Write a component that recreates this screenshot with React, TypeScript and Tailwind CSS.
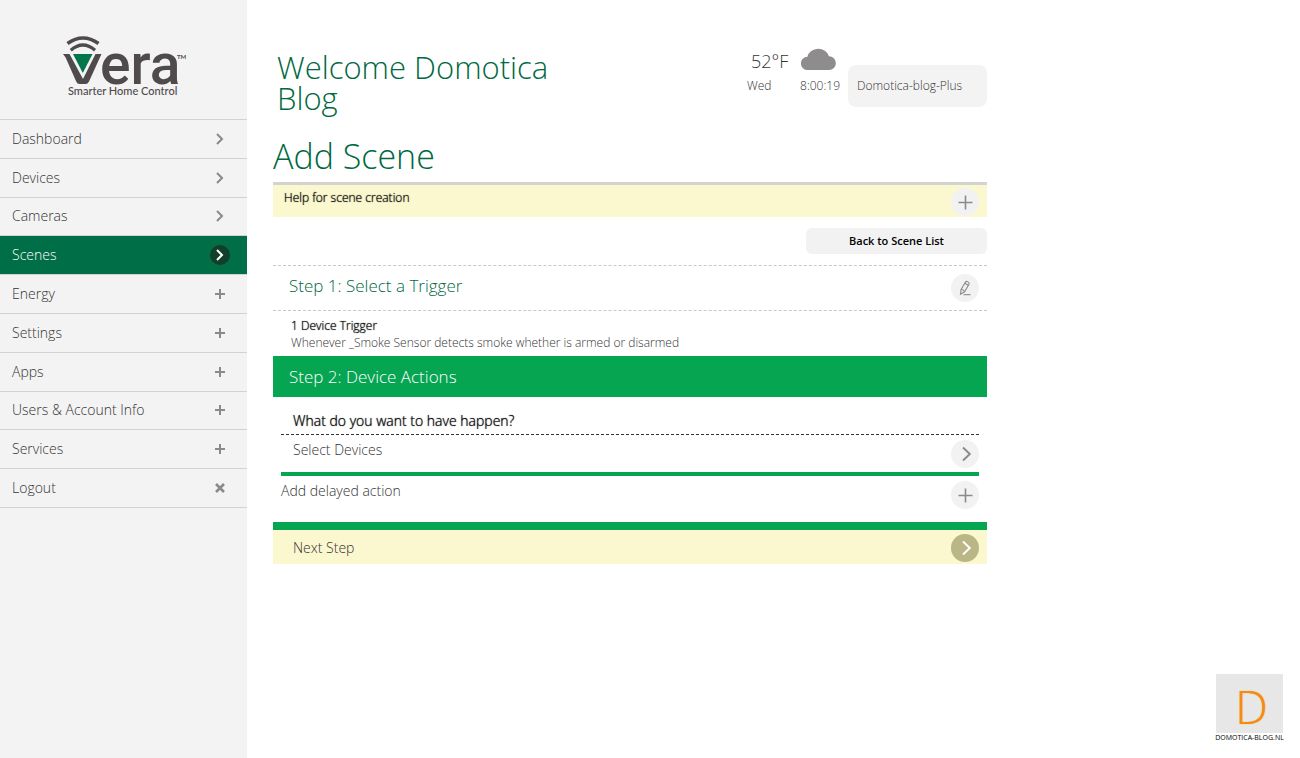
import React from "react";

type Glyph = "chevron" | "plus" | "close";

const NAV: { label: string; glyph: Glyph; active?: boolean }[] = [
  { label: "Dashboard", glyph: "chevron" },
  { label: "Devices", glyph: "chevron" },
  { label: "Cameras", glyph: "chevron" },
  { label: "Scenes", glyph: "chevron", active: true },
  { label: "Energy", glyph: "plus" },
  { label: "Settings", glyph: "plus" },
  { label: "Apps", glyph: "plus" },
  { label: "Users & Account Info", glyph: "plus" },
  { label: "Services", glyph: "plus" },
  { label: "Logout", glyph: "close" },
];

function NavGlyph({ glyph }: { glyph: Glyph }) {
  const paths: Record<Glyph, string> = {
    chevron: "M7 5 L12 10 L7 15",
    plus: "M10 5 V15 M5 10 H15",
    close: "M6 6 L14 14 M14 6 L6 14",
  };
  return (
    <svg viewBox="0 0 20 20" className="size-5" fill="none" stroke="currentColor" strokeWidth={glyph === "close" ? 2.6 : 2} aria-hidden="true">
      <path d={paths[glyph]} />
    </svg>
  );
}

function RoundButton({ label, glyph, strong }: { label: string; glyph: "plus" | "chevron" | "edit"; strong?: boolean }) {
  return (
    <button
      type="button"
      aria-label={label}
      className={
        strong
          ? "flex size-7 shrink-0 items-center justify-center rounded-full bg-[#bbb686] text-white"
          : "flex size-7 shrink-0 items-center justify-center rounded-full bg-[#f2f2f2] text-[#8a8a8a]"
      }
    >
      <svg viewBox="0 0 28 28" className="size-7" fill="none" stroke="currentColor" aria-hidden="true">
        {glyph === "plus" && <path d="M14.500 7.500 V21.500 M7.500 14.500 H21.500" strokeWidth="1.600" />}
        {glyph === "chevron" && <path d="M12 7.500 L18.800 14 L12 20.500" strokeWidth="1.900" />}
        {glyph === "edit" && (
          <g strokeWidth="1.100">
            <path d="M9.500 20.200 L10 15.600 L14.600 7.800 C15.400 6.600 18.900 8.500 18.100 10 L13.600 17.800 Z" />
            <path d="M10 15.600 C11.500 15.400 13.200 16.400 13.600 17.800 M13.800 9.300 L17.300 11.300" />
            <path d="M12.500 20.700 H19.500" />
          </g>
        )}
      </svg>
    </button>
  );
}

function VeraLogo() {
  return (
    <svg viewBox="0 0 126 64" className="h-16 w-[126px] overflow-visible" role="img" aria-label="Vera Smarter Home Control">
      <g fill="none" stroke="#4f4a4b">
        <path d="M5.500 8.500 Q21 -2.500 36.500 8.500" strokeWidth="3.600" />
        <path d="M8.800 15.200 Q21 5 33 15.200" strokeWidth="3.400" />
      </g>
      <path d="M1 19 H7.500 L21 44 L33.500 19 H39.500 L27 46.500 Q25.800 49 23.500 49 H17.500 Q15.400 49 14.200 46.500 L3.600 22.500 Z" fill="#4f4a4b" />
      <path d="M11 19 H30.500 L20.800 38 Z" fill="#00764a" />
      <text x="38" y="49" fontFamily="Roboto, sans-serif" fontSize="57" fontWeight="500" fill="#4f4a4b">era</text>
      <text x="115" y="24" fontFamily="Lato, sans-serif" fontSize="6" fontWeight="700" fill="#4f4a4b">TM</text>
      <text x="6" y="60" fontFamily="Lato, sans-serif" fontSize="11" fontWeight="500" fill="#4f4a4b">Smarter Home Control</text>
    </svg>
  );
}

export default function App() {
  return (
    <div className="relative flex min-h-screen bg-white font-['Open_Sans',sans-serif] font-light text-[#333]">
      <aside className="w-[247px] shrink-0 bg-[#f3f3f3]">
        <div className="flex h-[119px] items-end pb-5 pl-[62px]">
          <VeraLogo />
        </div>
        <nav aria-label="Main" className="grid h-[389px] auto-rows-fr border-t border-[#d2d2d2]">
          {NAV.map((item) => (
            <a
              key={item.label}
              href="#"
              aria-current={item.active ? "page" : undefined}
              className={
                item.active
                  ? "flex items-center justify-between border-b border-[#d2d2d2] bg-[#006e46] pr-[17px] pl-3 text-sm text-white"
                  : "flex items-center justify-between border-b border-[#d2d2d2] pr-[17px] pl-3 text-sm"
              }
            >
              <span>{item.label}</span>
              <span className={item.active ? "rounded-full bg-[#123f2c] text-white" : "text-[#8a8a8a]"}>
                <NavGlyph glyph={item.glyph} />
              </span>
            </a>
          ))}
        </nav>
      </aside>

      <main className="min-w-0 flex-1 pr-6 pl-[26px]">
        <div className="max-w-[714px]">
          <header className="flex items-start pt-[47px] pl-1">
            <h1 className="mt-[5px] w-[300px] text-[31px] leading-[31px] text-[#00693f]">Welcome Domotica Blog</h1>
            <div className="ml-auto w-[93px]">
              <div className="flex items-start justify-between pr-1 pl-1">
                <span className="text-lg leading-7">52°F</span>
                <svg viewBox="0 0 35 22" className="mt-px h-[22px] w-[35px]" fill="#8f8c8d" aria-hidden="true">
                  <path d="M6.600 22 A6.600 6.600 0 0 1 6.400 8.800 A11.200 10.500 0 0 1 28 8.200 A6.900 6.900 0 0 1 28 22 Z" />
                </svg>
              </div>
              <div className="mt-[3px] flex justify-between text-xs leading-4">
                <span>Wed</span>
                <span>8:00:19</span>
              </div>
            </div>
            <button type="button" className="mt-[18px] ml-2 h-[42px] w-[139px] rounded-lg bg-[#f3f3f3] px-[9px] text-left text-xs font-light">
              Domotica-blog-Plus
            </button>
          </header>

          <h2 className="mt-[19px] border-b-[3px] border-[#d3d3d3] pb-[3px] text-[34px] leading-[46px] text-[#00693f]">Add Scene</h2>
          <section className="flex h-8 justify-between bg-[#fbf7cf] pr-2 pl-[11px]">
            <h3 className="pt-1 text-xs leading-[18px] text-[#111] [text-shadow:0_0_1px_#111]">Help for scene creation</h3>
            <div className="pt-[3px]">
              <RoundButton label="Show help" glyph="plus" />
            </div>
          </section>

          <div className="flex justify-end py-[11px]">
            <button type="button" className="h-[26px] w-[181px] rounded-md bg-[#f2f2f2] text-[11px] font-semibold text-black">
              Back to Scene List
            </button>
          </div>

          <section>
            <div className="flex h-[46px] items-center justify-between border-y border-dashed border-[#c8c8c8] pr-2 pl-4">
              <h3 className="pb-1 text-[17px] text-[#00693f]">Step 1: Select a Trigger</h3>
              <RoundButton label="Edit trigger" glyph="edit" />
            </div>
            <div className="h-[45px] pt-[6px] pl-[18px] text-xs leading-[17px]">
              <p className="text-[#111] [text-shadow:0_0_1px_#111]">1 Device Trigger</p>
              <p>Whenever _Smoke Sensor detects smoke whether is armed or disarmed</p>
            </div>
          </section>

          <section>
            <h3 className="flex h-[41px] items-center bg-[#05a552] pl-4 text-[17px] text-white">Step 2: Device Actions</h3>
            <div className="px-2 pt-[14px]">
              <h4 className="border-b border-dashed border-[#333] pb-[3px] pl-3 text-sm text-[#111] [text-shadow:0_0_1px_#111]">What do you want to have happen?</h4>
              <div className="flex h-[41px] justify-between border-b-4 border-[#05a552] pl-3">
                <span className="pt-[5px] text-sm">Select Devices</span>
                <div className="pt-[5px]">
                  <RoundButton label="Select devices" glyph="chevron" />
                </div>
              </div>
              <div className="flex h-[46px] justify-between">
                <span className="pt-[5px] text-sm">Add delayed action</span>
                <div className="pt-[5px]">
                  <RoundButton label="Add delayed action" glyph="plus" />
                </div>
              </div>
            </div>
            <div className="flex h-[42px] items-center justify-between border-t-8 border-[#05a552] bg-[#fbf7cf] pt-px pr-2 pl-5">
              <span className="text-sm">Next Step</span>
              <RoundButton label="Next step" glyph="chevron" strong />
            </div>
          </section>
        </div>
      </main>

      <div className="absolute right-[17px] bottom-4 flex w-[67px] flex-col items-center">
        <div className="flex h-[59px] w-full items-center justify-center bg-[#e7e7e7] pt-1 pl-1 text-[46px] leading-none text-[#f58c12] [text-shadow:0_0_1px_#f58c12]">D</div>
        <span className="text-[7px] leading-[9px] font-normal whitespace-nowrap text-black">DOMOTICA-BLOG.NL</span>
      </div>
    </div>
  );
}
